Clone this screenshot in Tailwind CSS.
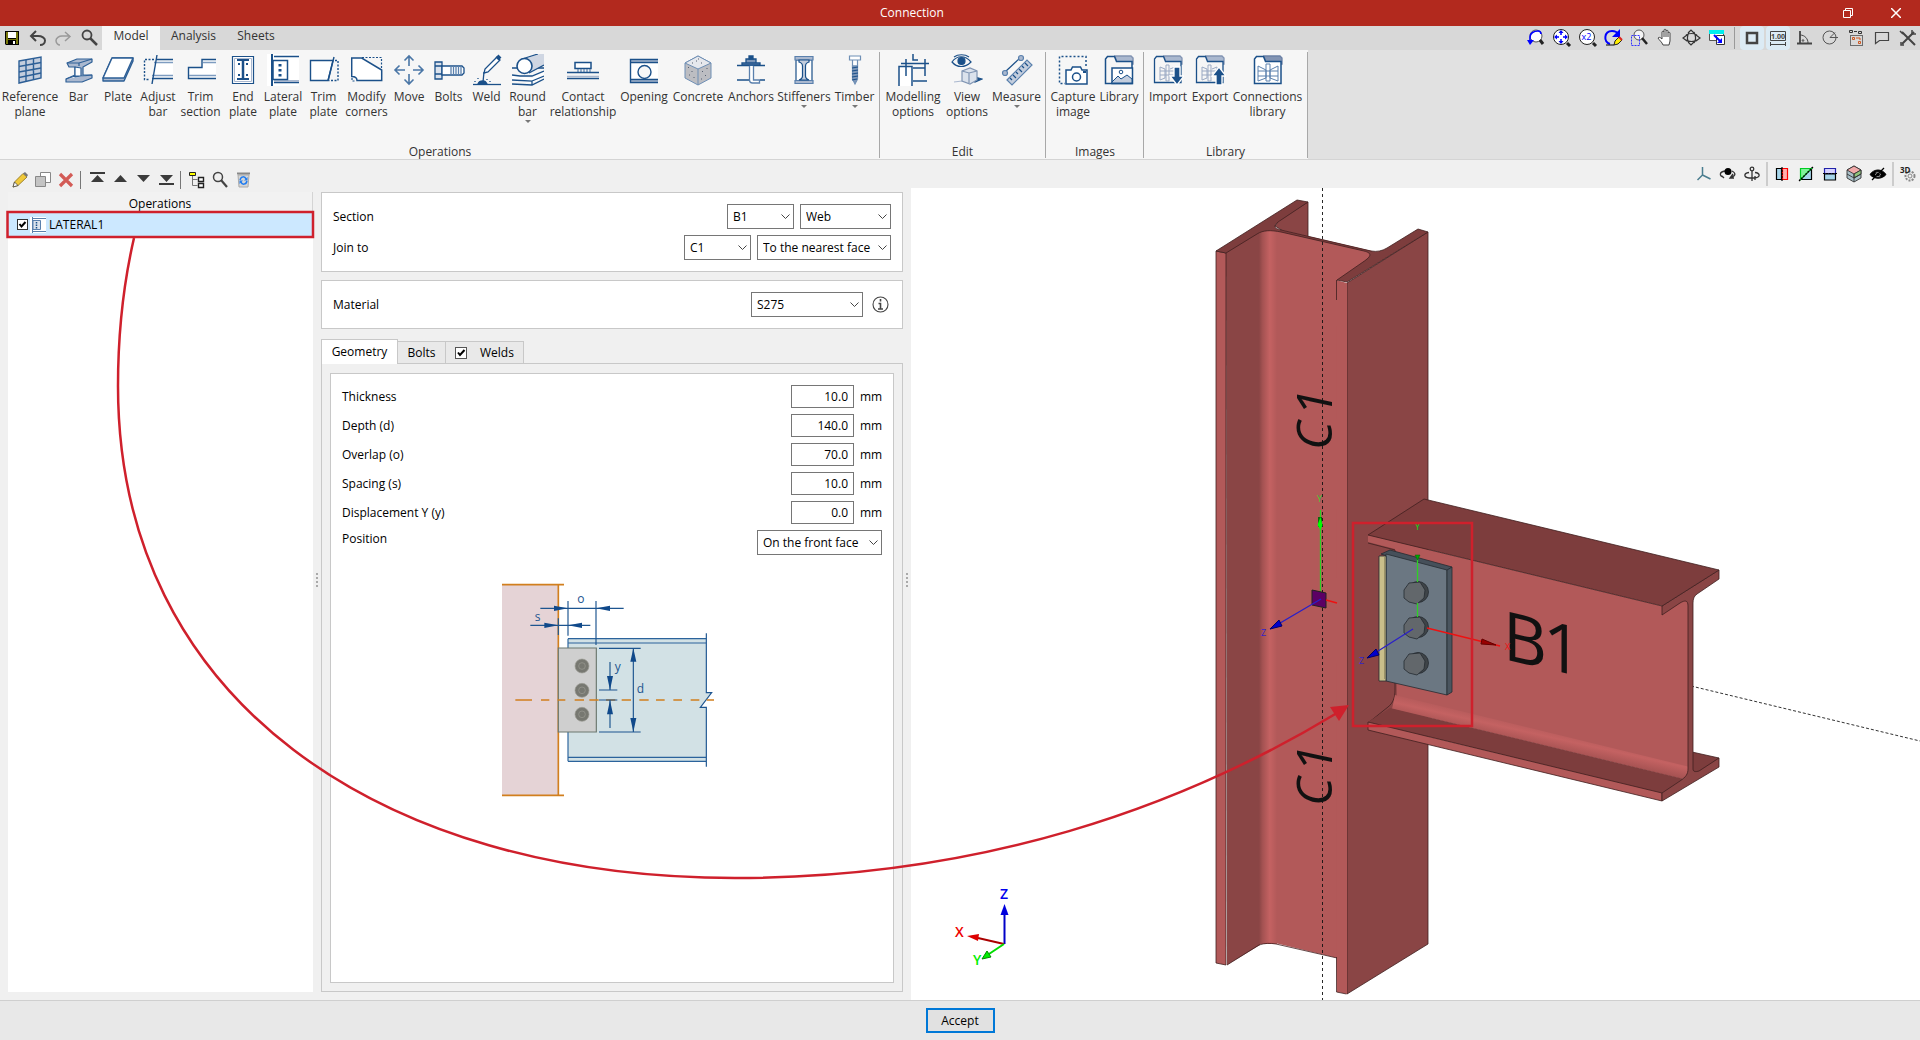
<!DOCTYPE html>
<html lang="en">

<head>
    <meta charset="UTF-8">
    <meta name="viewport" content="width=device-width, initial-scale=1.0">
    <script src="https://cdn.jsdelivr.net/npm/@tailwindcss/browser@4"></script>
    <title>Connection</title>
</head>

<body class="relative flex flex-col min-h-screen bg-[#f0f0f0] font-['Open_Sans','Noto_Sans',sans-serif] text-xs text-black">

    <!-- Title bar -->
    <header class="flex h-[26px] items-center bg-[#b2291e] text-white">
        <h1 class="flex-1 text-center">Connection</h1>
        <button class="flex w-12 justify-center" aria-label="Restore">
            <svg class="size-[10px]" viewBox="0 0 10 10" fill="none" stroke="#fff"><path d="M.5 2.500h7v7h-7zM2.500 2.500v-2h7v7h-2" /></svg>
        </button>
        <button class="flex w-12 justify-center" aria-label="Close">
            <svg class="size-[10px]" viewBox="0 0 10 10" fill="none" stroke="#fff" stroke-width="1.500"><path d="M0 0l10 10M10 0L0 10" /></svg>
        </button>
    </header>

    <!-- Quick access bar and ribbon tabs -->
    <nav class="flex h-6 items-center bg-[#d8d8d8] text-[#333]">
        <div class="flex w-[102px] shrink-0">
            <button class="w-[25px]" aria-label="Save">
                <svg class="size-6" viewBox="0 0 24 24"><path d="M5 5h14v14H6l-1-1z" fill="#000" /><path d="M6 6h2v7h8V6h2v12h-2v-4H8v4H6z" fill="#77770a" /><path d="M8 6h8v6H8z" fill="#fff" /><path d="M9 15h6v4H9z" fill="#000" /><path d="M13 15h2v3h-2z" fill="#fff" /></svg>
            </button>
            <button class="w-[26px]" aria-label="Undo">
                <svg class="size-6" viewBox="0 0 24 24" fill="none" stroke="#444" stroke-width="2"><path d="M11 5L6 10l5 5M6 10h7c4 0 7 2 7 4.500S18 19 15 19" /></svg>
            </button>
            <button class="w-[25px]" aria-label="Redo">
                <svg class="size-6" viewBox="0 0 24 24" fill="none" stroke="#999" stroke-width="1.500"><path d="M14 6l5 4.500-5 4.500M19 10h-8c-3 0-6 2-6 4.500S7 19 9 19" /></svg>
            </button>
            <button class="w-[26px]" aria-label="Search">
                <svg class="size-6" viewBox="0 0 24 24" fill="none" stroke="#444"><circle cx="11" cy="9" r="4.500" stroke-width="1.800" /><path d="M14 12l7 7" stroke-width="2.500" /></svg>
            </button>
        </div>
        <a href="#" class="flex h-6 w-[58px] justify-center bg-[#f6f6f6] leading-5">Model</a>
        <a href="#" class="flex h-6 w-[67px] justify-center leading-5">Analysis</a>
        <a href="#" class="flex h-6 w-[58px] justify-center leading-5">Sheets</a>

        <div class="ml-auto flex items-center gap-[2px]">
            <button aria-label="Previous view"><svg class="size-6" viewBox="0 0 24 24" fill="none"><circle cx="13" cy="10" r="6" fill="#fff" stroke="#555" /><path d="M17 14l3 4" stroke="#222" stroke-width="3" /><path d="M7 17V11c0-4 4-6 8-6 2 0 3 1 3 3" stroke="#00f" stroke-width="1.600" /><path d="M4 14h7l-4 5z" fill="#00f" /></svg></button>
            <button aria-label="Zoom extents"><svg class="size-6" viewBox="0 0 24 24" fill="none"><circle cx="12" cy="11" r="7.500" fill="#fff" stroke="#222" /><path d="M18 17l3 3" stroke="#222" stroke-width="3" /><path d="M12 5v4M12 13v4M6 11h4M14 11h4" stroke="#00f" stroke-width="1.500" /><path d="M12 4l-2.500 3h5zM12 18l-2.500-3h5zM5 11l3-2.500v5zM19 11l-3-2.500v5z" fill="#00f" /></svg></button>
            <button aria-label="Zoom x2"><svg class="size-6" viewBox="0 0 24 24" fill="none"><circle cx="12" cy="11" r="7.500" fill="#fff" stroke="#222" /><path d="M18 17l3 3" stroke="#222" stroke-width="3" /><text x="11.500" y="14" font-size="9" text-anchor="middle" fill="#00f">x2</text></svg></button>
            <button aria-label="Redraw"><svg class="size-6" viewBox="0 0 24 24" fill="none"><path d="M9 18C2 16 3 5 11 5c3 0 5 1 6 3" stroke="#00f" stroke-width="2" /><path d="M19 3v8h-8z" fill="#00f" /><path d="M5 19h8" stroke="#000" /><path d="M13 19l1-4 4-4 3 3-4 4z" fill="#fe0" stroke="#222" /><path d="M18 11l3 3" stroke="#d22" stroke-width="2" /></svg></button>
            <button aria-label="Zoom window"><svg class="size-6" viewBox="0 0 24 24" fill="none"><circle cx="12" cy="9" r="5" fill="#f4f4f4" stroke="#555" /><path d="M15 12l5 6" stroke="#222" stroke-width="2.500" /><path d="M4.500 9.500h8v10h-8z" stroke="#33f" stroke-dasharray="2 1" /></svg></button>
            <button aria-label="Pan"><svg class="size-6" viewBox="0 0 24 24"><path d="M10 19c-1-3-4-5-5-7 1-1 2-1 4 1V6c0-1 2-1 2 0V4c0-1 2-1 2 0v1c0-1 2-1 2 0v2c0-1 2-1 2 0v8l-1 4z" fill="#fff" stroke="#444" /><path d="M11 6v5M13 5v6M15 7v4" stroke="#444" /></svg></button>
            <button aria-label="Orbit"><svg class="size-6" viewBox="0 0 24 24" fill="none" stroke="#333" stroke-width="1.200"><path d="M9 7l3-3 3 3M9 16l3 3 3-3M8 9l-4 3 4 3M17 9l4 3-4 3M10 6c-2 4-2 8 0 11M15 6c2 4 2 8 0 11M7 9c3-2 8-2 11 0M7 14c3 2 8 2 11 0" /></svg></button>
            <button aria-label="Windows"><svg class="size-6" viewBox="0 0 24 24" fill="none"><path d="M4.500 4.500h14v10h-14z" fill="#fff" stroke="#555" /><path d="M4 4h15v4H4z" fill="#0ee" /><path d="M11.500 9.500h8v9h-8z" fill="#fff" stroke="#333" /><path d="M9 9l6 6" stroke="#00f" stroke-width="2" /><path d="M17 17v-5l-5 5z" fill="#00f" /></svg></button>
            <div class="mx-[3px] h-[22px] w-px bg-[#999]"></div>
            <button class="rounded bg-[#dcebf5]" aria-label="Outline"><svg class="size-6" viewBox="0 0 24 24" fill="none"><path d="M7 7h10v10H7z" stroke="#444" stroke-width="2.500" /></svg></button>
            <button class="rounded bg-[#dcebf5]" aria-label="Dimensions"><svg class="size-6" viewBox="0 0 24 24" fill="none" stroke="#444"><path d="M4.500 5.500h15v9h-15zM4.500 16v4M19.500 16v4M4.500 18.500h15" /><text x="12" y="13" font-size="7" text-anchor="middle" font-weight="700" fill="#444" stroke="none">1.00</text></svg></button>
            <button aria-label="Angle"><svg class="size-6" viewBox="0 0 24 24" fill="none" stroke="#444"><path d="M8 5v13M5 17.500h15" stroke-width="1.800" /><path d="M8 9c5 0 8 4 8 8" /><circle cx="11" cy="14.500" r=".8" /></svg></button>
            <button aria-label="Polar"><svg class="size-6" viewBox="0 0 24 24" fill="none" stroke="#555"><circle cx="11.500" cy="11.500" r="6.500" /><path d="M12 11.500h8M12 11.500l5-5" /></svg></button>
            <button aria-label="Grid"><svg class="size-6" viewBox="0 0 24 24" fill="none" stroke="#333"><path d="M5.500 4.500h3v2h-3zM14.500 5.500h3v2h-3zM10 5.500h3" /><path d="M6.500 9.500h12v10h-12z" stroke="#000" stroke-dasharray="1 1" /><path d="M8.500 11.500h2v2h-2zM14.500 15.500h2v2h-2zM12 12h4v2" stroke="#d1571f" /></svg></button>
            <button aria-label="Comment"><svg class="size-6" viewBox="0 0 24 24" fill="none" stroke="#444" stroke-width="1.200"><path d="M5.500 6.500h13v8h-9l-4 3z" /></svg></button>
            <button aria-label="Settings"><svg class="size-6" viewBox="0 0 24 24" fill="none" stroke="#444"><path d="M6 6l13 13M18 6L6 18" stroke-width="2" /><path d="M16 4v4h4M4 5l3 3M5 16v3h3" stroke-width="1.500" /></svg></button>
        </div>
    </nav>

    <!-- Ribbon -->
    <div class="flex h-[110px] border-b border-[#d4d4d4] bg-[#e1e1e1] text-[#333] leading-[15px]">
        <section class="bg-[#f6f6f6] pt-[2px]">
            <div class="flex h-[106px] flex-col justify-between border-r border-[#a8a8a8] pt-[2px] pr-[1px] pl-[2px]">
                <div class="flex items-start whitespace-nowrap">
                    <button class="flex w-[56px] flex-col items-center">
                        <svg class="mb-[3px] size-8" viewBox="0 0 32 32" stroke="#2d5f96" stroke-width="1.400"><path d="M5 7l22-4v21L5 29z" fill="#c3cddd" /><path d="M12 6v21.500M19.500 4.500v21M5 12.500l22-4M5 18l22-4M5 23.500l22-4.500" fill="none" /></svg>
                        Reference<br>plane
                    </button>
                    <button class="flex w-[41px] flex-col items-center">
                        <svg class="mb-[3px] size-8" viewBox="0 0 32 32" stroke="#2d5f96" stroke-width="1.200" stroke-linejoin="round"><path d="M4 9l10-4h15v3l-9 5v8l9 0v3l-10 4H3v-3l9-4v-8H6z" fill="#aab8cf" /><path d="M12 13l6 1v8l-6 1zM3 25l9-3h7l10-1" fill="#fff" /><path d="M4 9h12l13-4M16 9v3" fill="none" /></svg>
                        Bar
                    </button>
                    <button class="flex w-[38px] flex-col items-center">
                        <svg class="mb-[3px] size-8" viewBox="0 0 32 32" stroke="#2d5f96" stroke-width="1.400" stroke-linejoin="round"><path d="M1 24l9-20h21v3l-9 20H1z" fill="#aab8cf" /><path d="M1 24l9-20h21l-9 20z" fill="#fff" /></svg>
                        Plate
                    </button>
                    <button class="flex w-[42px] flex-col items-center">
                        <svg class="mb-[3px] size-8" viewBox="0 0 32 32" fill="none" stroke="#1b5089" stroke-width="1.400"><path d="M14 7h17v17H11z" fill="#fff" stroke="none" /><path d="M12 8.500h19M10 21.500h21" stroke="#7e9cc0" /><path d="M14 5.500h17M10 24.500h21" /><path d="M12 5.500H2.500v20H8" stroke-dasharray="2 1.500" /><path d="M15 1l-5 29" /></svg>
                        Adjust<br>bar
                    </button>
                    <button class="flex w-[43px] flex-col items-center">
                        <svg class="mb-[3px] size-8" viewBox="0 0 32 32" fill="none" stroke="#1b5089" stroke-width="1.400"><path d="M3 13h13V6h15v19H3z" fill="#fff" stroke="none" /><path d="M31 5.500H17v8H3.500v11H31" /><path d="M18 8.500h13M4 21.500h27" stroke="#7e9cc0" /></svg>
                        Trim<br>section
                    </button>
                    <button class="flex w-[42px] flex-col items-center">
                        <svg class="mb-[3px] size-8" viewBox="0 0 32 32" fill="none" stroke="#1b5089"><path d="M5.500 2.500h21v27h-21z" fill="#fff" stroke-width="1.200" /><path d="M7.500 4.500h17v23h-17z" stroke="#aab8cf" /><path d="M10 6h12M10 25h12" stroke-width="2" /><path d="M16 6v19" stroke-width="2.500" /><path d="M12 9v2M20 9v2M12 20v2M20 20v2" stroke-width="2" /></svg>
                        End<br>plate
                    </button>
                    <button class="flex w-[38px] flex-col items-center">
                        <svg class="mb-[3px] size-8" viewBox="0 0 32 32" fill="none" stroke="#1b5089"><path d="M0 0h32v32H0z" fill="#fff" stroke="none" /><path d="M5 0v32" stroke-width="2" /><path d="M7 2.500h25M7 28.500h25" stroke-width="1.500" /><path d="M7 27h25" stroke="#aab8cf" stroke-width="2" /><path d="M6 6.500h14.500v19H6z" stroke-width="1.500" /><path d="M13 10v2.500M13 15v2.500M13 20v2.500" stroke-width="3" /></svg>
                        Lateral<br>plate
                    </button>
                    <button class="flex w-[43px] flex-col items-center">
                        <svg class="mb-[3px] size-8" viewBox="0 0 32 32" fill="none" stroke="#1b5089" stroke-width="1.400"><path d="M25 6.500H2.500v20H20z" fill="#fff" /><path d="M26 3l-6 24" /><path d="M27 6.500h3v20h-9" stroke-dasharray="2 1.500" /></svg>
                        Trim<br>plate
                    </button>
                    <button class="flex w-[43px] flex-col items-center">
                        <svg class="mb-[3px] size-8" viewBox="0 0 32 32" fill="none" stroke="#1b5089" stroke-width="1.500"><path d="M.7 4h10l20 12v10.500H6c0-3-2-4-5.300-4z" fill="#fff" /><path d="M11 3.500h19.500V15M1 24v3h4" stroke-dasharray="2 1.500" stroke-width="1.200" /></svg>
                        Modify<br>corners
                    </button>
                    <button class="flex w-[42px] flex-col items-center">
                        <svg class="mb-[3px] size-8" viewBox="0 0 32 32" fill="none" stroke="#4a76a6" stroke-width="1.600"><path d="M16 12V2M16 20v10M12 16H2M20 16h10M11.500 6.500L16 2l4.500 4.500M11.500 25.500L16 30l4.500-4.500M6.500 11.500L2 16l4.500 4.500M25.500 11.500L30 16l-4.500 4.500" /></svg>
                        Move
                    </button>
                    <button class="flex w-[37px] flex-col items-center">
                        <svg class="mb-[3px] size-8" viewBox="0 0 32 32" stroke="#1b5089" stroke-width="1.300"><path d="M2 8h7v17H2z" fill="#dbe2ec" /><path d="M2 12h7M2 20h7" /><path d="M9 12h20l2 2v5l-2 2H9z" fill="#fff" /><path d="M18 12v9M20.500 12v9M23 12v9M25.500 12v9M28 12v9" stroke="#5a80ad" /></svg>
                        Bolts
                    </button>
                    <button class="flex w-[39px] flex-col items-center">
                        <svg class="mb-[3px] size-8" viewBox="0 0 32 32" fill="none" stroke="#1b5089" stroke-width="1.300"><path d="M2 30.500h28" /><path d="M26 3l3 3-12 12-4 1 1-4z" fill="#fff" /><path d="M26 2l3 3" stroke-width="4" /><path d="M13 18l-1 10" /><path d="M7 30c1-3 3-3 5-3s3 1 4 3z" fill="#1b5089" /><path d="M4 27v1M7 24v1M16 25v1M19 28v-1" /></svg>
                        Weld
                    </button>
                    <button class="flex w-[43px] flex-col items-center">
                        <svg class="mb-[3px] size-8" viewBox="0 0 32 32" fill="none" stroke="#1b5089" stroke-width="1.300"><path d="M0 26l20 3 12-6V18L20 24 0 21z" fill="#fff" stroke="none" /><path d="M0 14h32M0 21l8 1h12l12-5M0 26l20 1v4M0 30l20 1 12-6M20 27l12-5" /><path d="M12 5L28 0h4v11l-15 8z" fill="#cfd6e2" stroke="none" /><path d="M10 5L26 0M17 19l15-8" /><circle cx="12.500" cy="12" r="7.500" fill="#fff" stroke-width="1.600" /></svg>
                        Round<br>bar
                        <span class="mt-[1px] h-0 w-0 border-x-[3px] border-t-[3px] border-x-transparent border-t-[#777]"></span>
                    </button>
                    <button class="flex w-[68px] flex-col items-center">
                        <svg class="mb-[3px] size-8" viewBox="0 0 32 32" fill="none" stroke="#1b5089" stroke-width="1.500"><path d="M8 8.500h16v6H8z" fill="#fff" /><path d="M11 15v3M14 15v3M17 15v3M20 15v3M23 15v3" stroke="#5a80ad" stroke-width="1.200" /><path d="M0 18.500h32M0 24.500h32" /><path d="M0 22.500h32" stroke="#aab8cf" /></svg>
                        Contact<br>relationship
                    </button>
                    <button class="flex w-[54px] flex-col items-center">
                        <svg class="mb-[3px] size-8" viewBox="0 0 32 32" fill="none" stroke="#1b5089" stroke-width="1.400"><path d="M2 5h28v23H2z" fill="#fff" stroke="none" /><path d="M2 7h28M2 27h28" stroke="#aab8cf" stroke-width="3" /><path d="M30 5.500H2.500v23H30M3 8.500h27M3 25.500h27" /><circle cx="16.500" cy="18" r="6.500" fill="#f6f6f6" /></svg>
                        Opening
                    </button>
                    <button class="flex w-[54px] flex-col items-center">
                        <svg class="mb-[3px] size-8" viewBox="0 0 32 32" stroke="#6f8fb5"><path d="M16 2l13 7v15l-13 7-13-7V9z" fill="#bcbdc2" /><path d="M16 2l13 7-13 6L3 9z" fill="#e6e8ed" /><path d="M16 15v16" /><path d="M6 13l1 1M10 17v1M7 21l1 0M12 23v1M20 17l1 1M25 14v1M23 21l1 1M19 25h1M14 7h1M19 9h1M10 9h1M16 5h1" stroke="#555f70" /></svg>
                        Concrete
                    </button>
                    <button class="flex w-[52px] flex-col items-center">
                        <svg class="mb-[3px] size-8" viewBox="0 0 32 32" fill="none" stroke="#1b5089" stroke-width="1.300"><path d="M2 11.500h28M2 26h13M25 26h5" /><path d="M14.500 11v15c0 2 1 3 3 3h7v-3h-6V11z" fill="#fff" stroke="#5a80ad" /><path d="M7 9h18v2H7zM11 5h10v4H11z" fill="#7e97b8" /><path d="M14 2h4v3h-4z" fill="#1b5089" /></svg>
                        Anchors
                    </button>
                    <button class="flex w-[54px] flex-col items-center">
                        <svg class="mb-[3px] size-8" viewBox="0 0 32 32" stroke="#1b5089" stroke-width="1.200"><path d="M8 6h16v21H8z" fill="#fff" /><path d="M7 2.500h18v3.500H7zM7 26.500h18v3H7z" fill="#aab8cf" stroke="#5a80ad" /><path d="M11 6h10v2c-3 1-3.500 2-3.500 4v10c0 2 .5 3 3.500 4H11c3-1 3.500-2 3.500-4V12c0-2-.5-3-3.500-4z" fill="#c3cddd" /></svg>
                        Stiffeners
                        <span class="mt-[1px] h-0 w-0 border-x-[3px] border-t-[3px] border-x-transparent border-t-[#777]"></span>
                    </button>
                    <button class="flex w-[47px] flex-col items-center">
                        <svg class="mb-[3px] size-8" viewBox="0 0 32 32" stroke="#6f8fb5" stroke-width="1.200"><path d="M10.500 2h11v4h-11zM13.500 6h5v6h-5z" fill="#fff" /><path d="M13.500 12h5v13l-2.500 5-2.500-5z" fill="#7e97b8" /><path d="M13 14l6-1M13 17l6-1M13 20l6-1M13 23l6-1M13 26l5-1" stroke="#1b5089" /></svg>
                        Timber
                        <span class="mt-[1px] h-0 w-0 border-x-[3px] border-t-[3px] border-x-transparent border-t-[#777]"></span>
                    </button>
                </div>
                <p class="text-center leading-[13px]">Operations</p>
            </div>
        </section>
        <section class="bg-[#f6f6f6] pt-[2px]">
            <div class="flex h-[106px] flex-col justify-between border-r border-[#a8a8a8] px-[3px] pt-[2px]">
                <div class="flex items-start whitespace-nowrap">
                    <button class="flex w-[60px] flex-col items-center">
                        <svg class="mb-[3px] size-8" viewBox="0 0 32 32" fill="none" stroke="#1b5089" stroke-width="1.500"><path d="M2 12h14v20H2z" fill="#fff" stroke="none" /><path d="M2 32V12.500h13V32M4 9.500h28M16 0v6h5M9 5v17M28 5v17M16 14h12M16 27h14" /></svg>
                        Modelling<br>options
                    </button>
                    <button class="flex w-[48px] flex-col items-center">
                        <svg class="mb-[3px] size-8" viewBox="0 0 32 32" fill="none" stroke="#1b5089" stroke-width="1.200"><path d="M1 8c5-7 13-7 19 0-6 6-14 6-19 0zM3 3c4-3 11-3 15 0" /><circle cx="10.500" cy="7" r="3.500" fill="#1b5089" /><path d="M24 28v-5l7 2z" fill="#1b5089" /><path d="M3 28l8-1" stroke="#aab8cf" /><path d="M11 17l8-3 7 3v9l-7 4-8-3z" fill="#dbe2ec" stroke="#8095b3" /><path d="M11 17l7 2 8-2M18 19v10" stroke="#8095b3" /></svg>
                        View<br>options
                    </button>
                    <button class="flex w-[51px] flex-col items-center">
                        <svg class="mb-[3px] size-8" viewBox="0 0 32 32" stroke="#5a80ad" stroke-width="1.200"><path d="M4 18L19 4" stroke="#1b5089" /><circle cx="4" cy="19" r="2.500" fill="#aab8cf" /><circle cx="20" cy="4" r="2.500" fill="#aab8cf" /><path d="M6 26L26 6l5 5-20 20z" fill="#c3cddd" /><path d="M9 24l2 2M12 21l3 3M15 18l2 2M18 15l3 3M21 12l2 2M24 9l3 3" stroke="#1b5089" /></svg>
                        Measure
                        <span class="mt-[1px] h-0 w-0 border-x-[3px] border-t-[3px] border-x-transparent border-t-[#777]"></span>
                    </button>
                </div>
                <p class="text-center leading-[13px]">Edit</p>
            </div>
        </section>
        <section class="bg-[#f6f6f6] pt-[2px]">
            <div class="flex h-[106px] flex-col justify-between border-r border-[#a8a8a8] pt-[2px] pr-[2px] pl-[3px]">
                <div class="flex items-start whitespace-nowrap">
                    <button class="flex w-[48px] flex-col items-center">
                        <svg class="mb-[3px] size-8" viewBox="0 0 32 32" fill="none" stroke="#1b5089" stroke-width="1.500"><path d="M29 12V2.500H2.500v27H8" stroke-dasharray="2 2" /><path d="M9 16h5l1.500-3h8L25 16h5v14H9z" fill="#fff" /><circle cx="19.500" cy="23" r="4" /><path d="M26 18h3" stroke-width="2" /></svg>
                        Capture<br>image
                    </button>
                    <button class="flex w-[44px] flex-col items-center">
                        <svg class="mb-[3px] size-8" viewBox="0 0 32 32" fill="none" stroke="#1b5089" stroke-width="1.500"><path d="M12 2h16l2 2v6H14z" fill="#aab8cf" stroke="#8294b3" /><path d="M2.500 29.500V5l2-2.500h7l2 5h15.500v22z" fill="#f6f6f6" /><path d="M9 14h20.500v15.500H9z" fill="#fff" /><path d="M9 28l6-6 3 3 6-4 5 4v4H9z" fill="#c3cddd" stroke-width="1" /><circle cx="18" cy="18" r="1.800" stroke-width="1" /></svg>
                        Library
                    </button>
                </div>
                <p class="text-center leading-[13px]">Images</p>
            </div>
        </section>
        <section class="bg-[#f6f6f6] pt-[2px]">
            <div class="flex h-[106px] flex-col justify-between border-r border-[#a8a8a8] px-[3px] pt-[2px]">
                <div class="flex items-start whitespace-nowrap">
                    <button class="flex w-[42px] flex-col items-center">
                        <svg class="mb-[3px] size-8" viewBox="0 0 32 32" fill="none" stroke="#5a80ad" stroke-width="1.300"><path d="M12 2h16l2 2v6H14z" fill="#aab8cf" stroke="#8294b3" /><path d="M2.500 28.500V5l2-2.500h7l2 5H29v21z" fill="#f6f6f6" stroke="#1b5089" /><path d="M8 13l5 2v9l-5 2zM14 11h3v16h-3zM18 15l5-2v10M8 17h14M8 21h14" stroke="#9aa9c3" stroke-width="1" /><path d="M22 13h6v9h4l-7 9-7-9h4z" fill="#1b5089" stroke="#fff" /></svg>
                        Import
                    </button>
                    <button class="flex w-[42px] flex-col items-center">
                        <svg class="mb-[3px] size-8" viewBox="0 0 32 32" fill="none" stroke="#5a80ad" stroke-width="1.300"><path d="M12 2h16l2 2v6H14z" fill="#aab8cf" stroke="#8294b3" /><path d="M2.500 28.500V5l2-2.500h7l2 5H29v21z" fill="#f6f6f6" stroke="#1b5089" /><path d="M8 13l5 2v9l-5 2zM14 11h3v16h-3zM18 15l5-2v10M8 17h14M8 21h14" stroke="#9aa9c3" stroke-width="1" /><path d="M22 31h6v-9h4l-7-9-7 9h4z" fill="#1b5089" stroke="#fff" /></svg>
                        Export
                    </button>
                    <button class="flex w-[73px] flex-col items-center">
                        <svg class="mb-[3px] size-8" viewBox="0 0 32 32" fill="none" stroke="#1b5089" stroke-width="1.300"><path d="M12 2h16l2 2v6H14z" fill="#8294b3" stroke="#6b80a5" /><path d="M2.500 29.500V5l2-2.500h7l2 5h15.500v22z" fill="#fff" stroke-width="1.500" /><path d="M6 12l8 4v8l-8 3zM26 12l-8 4v8l8 3zM14 10h4v17h-4zM6 17h20M6 22h20" stroke="#5a80ad" stroke-width="1" /></svg>
                        Connections<br>library
                    </button>
                </div>
                <p class="text-center leading-[13px]">Library</p>
            </div>
        </section>
    </div>

    <main class="flex flex-1">

        <!-- Operations list and data panels -->
        <div class="flex w-[911px] shrink-0 flex-col pb-2">
            <div class="flex h-8 items-center pt-2 pl-2">
                <button class="w-[23px]" aria-label="Edit"><svg class="size-6" viewBox="0 0 24 24"><path d="M5 19l1.500-5L15 5.500l4 3.500-9 8.500z" fill="#f0c93b" stroke="#8a6d14" stroke-width=".8" /><path d="M5 19l1.500-5 3.500 3.500z" fill="#fff" stroke="#444" stroke-width=".8" /><path d="M15 5.500L17 4l3 3-1.200 2z" fill="#777" /></svg></button>
                <button class="w-[23px]" aria-label="Copy"><svg class="size-6" viewBox="0 0 24 24" stroke="#888"><path d="M9.500 4.500h10v10h-10z" fill="#fff" /><path d="M4.500 8.500h10v10h-10z" fill="#c4c4c4" /></svg></button>
                <button class="w-[23px]" aria-label="Delete"><svg class="size-6" viewBox="0 0 24 24"><path d="M6 6l12 12M18 6L6 18" stroke="#d35b56" stroke-width="3.200" /></svg></button>
                <div class="mr-[4px] ml-[3px] h-[18px] w-px bg-[#777]"></div>
                <button class="w-[23px]" aria-label="Move to top"><svg class="size-6" viewBox="0 0 24 24" fill="#3b3b3b"><path d="M5 4h15v2H5zM12.500 7l6.500 7H6z" /></svg></button>
                <button class="w-[23px]" aria-label="Move up"><svg class="size-6" viewBox="0 0 24 24" fill="#3b3b3b"><path d="M12.500 7l6.500 7H6z" /></svg></button>
                <button class="w-[23px]" aria-label="Move down"><svg class="size-6" viewBox="0 0 24 24" fill="#3b3b3b"><path d="M12.500 14L19 7H6z" /></svg></button>
                <button class="w-[23px]" aria-label="Move to bottom"><svg class="size-6" viewBox="0 0 24 24" fill="#3b3b3b"><path d="M5 15h15v2H5zM12.500 14L19 7H6z" /></svg></button>
                <div class="mr-[4px] ml-[3px] h-[18px] w-px bg-[#777]"></div>
                <button class="w-[23px]" aria-label="Tree"><svg class="size-6" viewBox="0 0 24 24" fill="none" stroke="#222"><path d="M4.500 4.500h6v3h-6z" fill="#ff0" /><path d="M7.500 8v9.500h5M7.500 11.500h5" stroke="#777" /><path d="M13.500 9.500h5v4h-5zM13.500 15.500h5v4h-5z" fill="#fff" stroke-width="1.400" /></svg></button>
                <button class="w-[23px]" aria-label="Find"><svg class="size-6" viewBox="0 0 24 24" fill="none" stroke="#444"><circle cx="10" cy="9" r="4.500" stroke-width="1.500" /><path d="M13 12l6 7" stroke-width="2.200" /></svg></button>
                <button class="w-[23px]" aria-label="Recycle"><svg class="size-6" viewBox="0 0 24 24" fill="none"><path d="M7 7h11l-1 12H8z" fill="#d6d6d6" stroke="#aaa" /><path d="M6 5.500h13" stroke="#888" stroke-width="2" /><path d="M9 12c1-4 5-4 6-1M16 13c-1 4-5 4-6 1" stroke="#1e7bf0" stroke-width="1.500" /><path d="M16.500 9v3.500H13zM8.500 16v-3.500H12z" fill="#1e7bf0" /></svg></button>
            </div>

            <div class="flex flex-1">
                <section class="ml-2 flex w-[305px] flex-col bg-white">
                    <h2 class="h-5 border-r border-[#d4d4d4] bg-[#f2f2f2] text-center leading-6">Operations</h2>
                    <div class="flex h-[25px] items-center bg-[#cce8ff] pl-[9px]">
                        <span class="relative flex size-[11px]">
                            <input id="op1" type="checkbox" checked class="size-[11px] appearance-none border border-[#333] bg-white">
                            <svg class="pointer-events-none absolute inset-0 size-[11px]" viewBox="0 0 11 11" fill="none" stroke="#000" stroke-width="2"><path d="M2.500 5l2 2.500L8.500 3" /></svg>
                        </span>
                        <svg class="ml-[2px] size-4" viewBox="0 0 16 16" fill="none" stroke="#5a80ad"><path d="M0 0h16v16H0z" fill="#fff" stroke="none" /><path d="M2.500 0v16M3 1.500h13M3 14.500h13" /><path d="M3 3.500h7.500v9H3z" fill="#dbe2ec" /><path d="M6.500 5v1.500M6.500 7.500v1.500M6.500 10v1.500" stroke="#1b5089" stroke-width="1.500" /></svg>
                        <label for="op1" class="ml-[3px]">LATERAL1</label>
                    </div>
                </section>

                <div class="flex w-2 items-center justify-center pb-6">
                    <div class="flex flex-col gap-[2px]">
                        <i class="size-[2px] bg-[#aaa]"></i><i class="size-[2px] bg-[#aaa]"></i><i class="size-[2px] bg-[#aaa]"></i><i class="size-[2px] bg-[#aaa]"></i>
                    </div>
                </div>

                <div class="flex w-[582px] flex-col">
                    <section class="flex flex-col gap-[6px] border border-[#c8c8c8] bg-white p-[11px]">
                        <div class="flex items-center justify-between">
                            <label for="section">Section</label>
                            <div class="flex gap-[6px]">
                                <div class="relative">
                                    <select id="section" class="h-[25px] w-[67px] appearance-none border border-[#767676] bg-white pl-[5px]"><option>B1</option></select>
                                    <svg class="pointer-events-none absolute top-[10px] right-[4px] h-[6px] w-[9px]" viewBox="0 0 9 6" fill="none" stroke="#444"><path d="M.5.5l4 4 4-4" /></svg>
                                </div>
                                <div class="relative">
                                    <select aria-label="Part" class="h-[25px] w-[91px] appearance-none border border-[#767676] bg-white pl-[5px]"><option>Web</option></select>
                                    <svg class="pointer-events-none absolute top-[10px] right-[4px] h-[6px] w-[9px]" viewBox="0 0 9 6" fill="none" stroke="#444"><path d="M.5.5l4 4 4-4" /></svg>
                                </div>
                            </div>
                        </div>
                        <div class="flex items-center justify-between">
                            <label for="join">Join to</label>
                            <div class="flex gap-[6px]">
                                <div class="relative">
                                    <select id="join" class="h-[25px] w-[67px] appearance-none border border-[#767676] bg-white pl-[5px]"><option>C1</option></select>
                                    <svg class="pointer-events-none absolute top-[10px] right-[4px] h-[6px] w-[9px]" viewBox="0 0 9 6" fill="none" stroke="#444"><path d="M.5.5l4 4 4-4" /></svg>
                                </div>
                                <div class="relative">
                                    <select aria-label="Face" class="h-[25px] w-[134px] appearance-none border border-[#767676] bg-white pl-[5px]"><option>To the nearest face</option></select>
                                    <svg class="pointer-events-none absolute top-[10px] right-[4px] h-[6px] w-[9px]" viewBox="0 0 9 6" fill="none" stroke="#444"><path d="M.5.5l4 4 4-4" /></svg>
                                </div>
                            </div>
                        </div>
                    </section>

                    <section class="mt-2 flex items-center border border-[#c8c8c8] bg-white p-[11px]">
                        <label for="material" class="flex-1">Material</label>
                        <div class="relative">
                            <select id="material" class="h-[25px] w-[112px] appearance-none border border-[#767676] bg-white pl-[5px]"><option>S275</option></select>
                            <svg class="pointer-events-none absolute top-[10px] right-[4px] h-[6px] w-[9px]" viewBox="0 0 9 6" fill="none" stroke="#444"><path d="M.5.5l4 4 4-4" /></svg>
                        </div>
                        <button class="mr-[2px] ml-[9px]" aria-label="Information">
                            <svg class="size-[17px]" viewBox="0 0 17 17" fill="none" stroke="#444"><circle cx="8.500" cy="8.500" r="7.500" stroke-width="1.100" /><path d="M8.500 3v2.500M6.500 7.500h2V13M6 13h5" stroke-width="1.600" /></svg>
                        </button>
                    </section>

                    <div class="mt-[10px] flex h-6 items-end">
                        <button class="z-10 -mb-px h-[25px] w-[77px] border border-b-0 border-[#c8c8c8] bg-white">Geometry</button>
                        <button class="h-[22px] w-[48px] border-t border-r border-[#c8c8c8] bg-[#e9e9e9]">Bolts</button>
                        <div class="flex h-[22px] w-[78px] items-center gap-[13px] border-t border-r border-[#c8c8c8] bg-[#e9e9e9] pl-[9px]">
                            <span class="relative flex size-[12px]">
                                <input id="welds" type="checkbox" checked class="size-[12px] appearance-none border border-[#555] bg-white">
                                <svg class="pointer-events-none absolute inset-0 size-[12px]" viewBox="0 0 12 12" fill="none" stroke="#000" stroke-width="2"><path d="M3 5.500l2 2.500 4.500-5" /></svg>
                            </span>
                            <label for="welds">Welds</label>
                        </div>
                    </div>
                    <div class="flex flex-1 flex-col border border-[#c8c8c8] px-2 pt-[9px] pb-2">
                        <section class="flex flex-1 flex-col gap-[6px] border border-[#c8c8c8] bg-white p-[11px]">
                            <div class="flex items-center gap-[6px]">
                                <label for="thickness" class="flex-1">Thickness</label>
                                <input id="thickness" type="text" value="10.0" class="h-[23px] w-[63px] border border-[#767676] pr-[5px] text-right">
                                <span class="w-[22px]">mm</span>
                            </div>
                            <div class="flex items-center gap-[6px]">
                                <label for="depth" class="flex-1">Depth (d)</label>
                                <input id="depth" type="text" value="140.0" class="h-[23px] w-[63px] border border-[#767676] pr-[5px] text-right">
                                <span class="w-[22px]">mm</span>
                            </div>
                            <div class="flex items-center gap-[6px]">
                                <label for="overlap" class="flex-1">Overlap (o)</label>
                                <input id="overlap" type="text" value="70.0" class="h-[23px] w-[63px] border border-[#767676] pr-[5px] text-right">
                                <span class="w-[22px]">mm</span>
                            </div>
                            <div class="flex items-center gap-[6px]">
                                <label for="spacing" class="flex-1">Spacing (s)</label>
                                <input id="spacing" type="text" value="10.0" class="h-[23px] w-[63px] border border-[#767676] pr-[5px] text-right">
                                <span class="w-[22px]">mm</span>
                            </div>
                            <div class="flex items-center gap-[6px]">
                                <label for="displacement" class="flex-1">Displacement Y (y)</label>
                                <input id="displacement" type="text" value="0.0" class="h-[23px] w-[63px] border border-[#767676] pr-[5px] text-right">
                                <span class="w-[22px]">mm</span>
                            </div>
                            <div class="flex items-start justify-between">
                                <label for="position" class="leading-[18px]">Position</label>
                                <div class="relative">
                                    <select id="position" class="h-[25px] w-[125px] appearance-none border border-[#767676] bg-white pl-[5px]"><option>On the front face</option></select>
                                    <svg class="pointer-events-none absolute top-[10px] right-[4px] h-[6px] w-[9px]" viewBox="0 0 9 6" fill="none" stroke="#444"><path d="M.5.5l4 4 4-4" /></svg>
                                </div>
                            </div>

                            <!-- Plate diagram -->
                            <svg class="mx-auto mt-[19px] size-[220px]" viewBox="66 60 660 660" fill="none">
                                <path d="M66 74h168v632H66z" fill="#e5d3d6" />
                                <path d="M66 74h186M66 706h186M235 74v632" stroke="#d17f1e" stroke-width="5" />
                                <path d="M264 236h414v162l16 0-34 44h18v162H264z" fill="#d2e1e5" />
                                <path d="M264 236v368M264 236h414M264 249h414M264 592h414M264 604h414" stroke="#2b639c" stroke-width="3.500" />
                                <path d="M679 220v178h16l-34 44h18v178" stroke="#1d5590" stroke-width="3.500" />
                                <path d="M235 264h114v252H235z" fill="#cfcfcf" stroke="#6c7870" stroke-width="3.500" />
                                <path d="M106 420h50M183 420h25M233 420h23M284 420h28M328 420h28M378 420h28M425 420h28M478 420h28M528 420h26M580 420h26M632 420h26M680 420h22" stroke="#d17f1e" stroke-width="5" />
                                <g fill="#777871" stroke="#9b9c94" stroke-width="2"><circle cx="306" cy="318" r="21" /><circle cx="306" cy="391" r="21" /><circle cx="306" cy="463" r="21" /><circle cx="306" cy="318" r="10" /><circle cx="306" cy="391" r="10" /><circle cx="306" cy="463" r="10" /></g>
                                <path d="M235 175v50M264 123v104M348 123v132M181 145h250M151 196h180M357 265h125M357 516h125M460 265v251M390 306v84M390 420v84M357 390h55M357 420h55" stroke="#1d5590" stroke-width="3.500" />
                                <path d="M264 145l-42-8v16zM348 145l42-8v16zM235 196l-42-8v16zM264 196l42-8v16zM460 265l-9 40h18zM460 516l-9-42h18zM390 390l-9-42h18zM390 421l-9 42h18z" fill="#10498a" />
                                <g fill="#1d5590" font-size="36"><text x="292" y="129">o</text><text x="164" y="184">s</text><text x="404" y="332">y</text><text x="470" y="399">d</text></g>
                            </svg>
                        </section>
                    </div>
                </div>

                <div class="flex w-2 items-center justify-center pb-6">
                    <div class="flex flex-col gap-[2px]">
                        <i class="size-[2px] bg-[#aaa]"></i><i class="size-[2px] bg-[#aaa]"></i><i class="size-[2px] bg-[#aaa]"></i><i class="size-[2px] bg-[#aaa]"></i>
                    </div>
                </div>
            </div>
        </div>

        <!-- 3D view -->
        <div class="flex min-w-0 flex-1 flex-col">
            <div class="flex h-7 items-center justify-end">
                <button aria-label="Axes"><svg class="size-6" viewBox="0 0 24 24" fill="none" stroke="#4a7d8f" stroke-width="1.500"><path d="M10.500 5v9M10.500 13l-5 5M10.500 13l8 4" /></svg></button>
                <button aria-label="Rotate view"><svg class="size-6" viewBox="0 0 24 24" fill="none" stroke="#333" stroke-width="1.300"><path d="M9 9c-6 1-6 5-1 6.500M16 9c4 2 4 5-1 6M8 16l-2-2M17 12l-3 4h4" /><circle cx="12" cy="9.500" r="3.500" fill="#000" stroke="none" /></svg></button>
                <button aria-label="Rotate around axis"><svg class="size-6" viewBox="0 0 24 24" fill="none" stroke="#333" stroke-width="1.300"><circle cx="12" cy="7" r="1.800" /><path d="M12 9v10M9 10.500c-6 1-5 5 0 5.500h6c6-1 5-5 0-5.500M15 14v4" /></svg></button>
                <div class="mx-[2px] h-6 w-[2px] bg-[#ccc]"></div>
                <button aria-label="Section X"><svg class="size-6" viewBox="0 0 24 24" stroke-width="1.200"><path d="M6.500 6.500h5v11h-5z" fill="#a6d5ea" stroke="#000" /><path d="M12.500 6.500h5v11h-5z" fill="#ffb0b0" stroke="#f00" /><path d="M12 5v14" stroke="#000" stroke-dasharray="2 1" /></svg></button>
                <button aria-label="Section diagonal"><svg class="size-6" viewBox="0 0 24 24" stroke-width="1.200"><path d="M17.500 6.500v11h-11z" fill="#a6d5ea" stroke="#000" /><path d="M17.500 6.500h-11v11z" fill="#80f49a" stroke="#0c2" /><path d="M5 19L19 5" stroke="#000" stroke-dasharray="2 1" /></svg></button>
                <button aria-label="Section Z"><svg class="size-6" viewBox="0 0 24 24" stroke-width="1.200"><path d="M6.500 6.500h11v5h-11z" fill="#d6d3ff" stroke="#22a" /><path d="M6.500 12h11v6h-11z" fill="#a6d5ea" stroke="#000" /><path d="M5 11.500h14" stroke="#000" stroke-dasharray="2 1" /></svg></button>
                <button aria-label="Layers"><svg class="size-6" viewBox="0 0 24 24" stroke="#333" stroke-width=".9"><path d="M12 4l7 4v8l-7 4-7-4V8z" fill="#a8bfc8" /><path d="M12 4l7 4-7 4-7-4z" fill="#f1a9a9" /><path d="M12 12l7-4v4l-7 4z" fill="#8fc47b" /><path d="M5 12l7 4 7-4M12 12v8" fill="none" /></svg></button>
                <button aria-label="Hide"><svg class="size-6" viewBox="0 0 24 24" fill="none" stroke="#000"><path d="M4 12.500c4-6 12-6 16 0-4 5-12 5-16 0z" fill="#000" /><circle cx="12" cy="12.500" r="3" fill="#eee" /><circle cx="12" cy="12.500" r="1.500" fill="#000" /><path d="M6 18L18 6" stroke-width="1.300" /></svg></button>
                <div class="mx-[2px] h-6 w-[2px] bg-[#ccc]"></div>
                <button aria-label="3D settings"><svg class="size-6" viewBox="0 0 24 24" fill="none"><circle cx="14" cy="14" r="4.500" stroke="#888" stroke-width="2" stroke-dasharray="2 1.200" /><circle cx="14" cy="14" r="2" stroke="#888" /><text x="4" y="11" font-size="8" font-weight="700" fill="#222">3D</text></svg></button>
            </div>

            <svg class="min-h-0 w-full flex-1 bg-white" viewBox="911 188 1009 812" fill="none">
                <defs>
                    <linearGradient id="fillet"><stop offset="0" stop-color="#8a4545" /><stop offset=".2" stop-color="#a45252" /><stop offset=".6" stop-color="#c46262" /><stop offset="1" stop-color="#b25959" /></linearGradient>
                    <linearGradient id="root" gradientUnits="userSpaceOnUse" x1="1540" y1="725" x2="1534" y2="752"><stop offset="0" stop-color="#b25959" /><stop offset=".35" stop-color="#c46262" /><stop offset=".8" stop-color="#a35151" /><stop offset="1" stop-color="#7d3d3d" /></linearGradient>
                </defs>

                <!-- Column C1 -->
                <g stroke="#40201f" stroke-width=".8" stroke-linejoin="round">
                    <path d="M1280 219l28-17v35l-25-6-8-5z" fill="#8a4545" />
                    <path d="M1260 230l22 0 90 21v6l-35 24v677l-62-15h-15z" fill="#b25959" stroke="none" />
                    <path d="M1226 252l34-22v715l-33 20z" fill="#8a4545" stroke="none" />
                    <path d="M1259 231l7-1h11v714h-18z" fill="url(#fillet)" stroke="none" />
                    <path d="M1216 251l10 2v712l-10-2z" fill="#b25959" />
                    <path d="M1227 965l32-20c6-2 11-2 17-1l61 14" />
                    <path d="M1347 283l81-51v712l-81 50z" fill="#8a4545" />
                    <path d="M1336 280l11 3v711l-10-2-.5-35z" fill="#b25959" stroke="none" />
                    <path d="M1336.500 957v35l10 2M1336.500 280v20" />
                    <path d="M1216 251l81-51 11 2-27 18c-8 5-8 8 0 10l90 21c6 1 11 0 16-3l31-19 10 3-81 50-10-2 26-18c9-6 9-9 1-11l-83-19c-10-2-18-2-24 2l-31 19z" fill="#7d3d3d" />
                </g>
                <path d="M1322.500 188V1000" stroke="#111" stroke-dasharray="3 3" stroke-width=".9" />

                <!-- Beam B1 -->
                <path d="M1691 686L1920 741" stroke="#333" stroke-dasharray="3 2" />
                <g stroke="#40201f" stroke-width=".8" stroke-linejoin="round">
                    <path d="M1368 535l294 71 30-10v185l-295-73-2-159-27-7z" fill="#b25959" stroke="none" />
                    <path d="M1368 543l27 7v140c0 8-2 13-7 17l-20 16" />
                    <path d="M1395 695l295 72c0 6-3 9-8 12l-290-70z" fill="url(#root)" stroke="none" />
                    <path d="M1368 722l22-14 294 71-22 15z" fill="#7d3d3d" stroke="none" />
                    <path d="M1368 722l294 71v8l-294-71z" fill="#b25959" />
                    <path d="M1692 752l27 6-22 16-5-4z" fill="#7d3d3d" />
                    <path d="M1662 606l57-36v9l-22 15c-3 2-4 5-4 9v166c0 3 3 3 6 2l20-13v9l-57 34v-8l18-12c6-4 8-7 8-12V606c0-6-3-6-8-3l-18 12z" fill="#8a4545" />
                    <path d="M1368 535l56-36 295 71-57 36z" fill="#7d3d3d" />
                </g>

                <!-- Member names, following the slope of the steel -->
                <g fill="#111">
                    <text transform="translate(1332 450) rotate(-90)" x="0 34" font-size="49" font-style="italic">C1</text>
                    <text transform="translate(1332 806) rotate(-90)" x="0 34" font-size="49" font-style="italic">C1</text>
                    <text transform="translate(1503 659) skewY(13)" font-size="68">B</text>
                    <text transform="translate(1543 668) skewY(13)" font-size="68">1</text>
                </g>

                <!-- Lateral plate and bolts -->
                <g stroke="#252b31" stroke-width=".8">
                    <path d="M1381 554l9-4 62 17-5 4-63-16z" fill="#46505a" />
                    <path d="M1386 554l61 16v125l-61-14z" fill="#6b7782" />
                    <path d="M1447 570l5-3v125l-5 3z" fill="#4a555f" />
                    <path d="M1379 556h7v125h-7z" fill="#c9be8a" />
                    <path d="M1384.500 557v122" stroke="#8f8660" />
                    <g fill="#3f4448"><circle cx="1418" cy="592" r="10.500" /><circle cx="1418" cy="627" r="10.500" /><circle cx="1418" cy="663" r="10.500" /></g>
                    <path d="M1404 590l5-7 11-1 5 8-1 8-7 6-8-2-5-4zM1404 625l5-7 11-1 5 8-1 8-7 6-8-2-5-4zM1404 661l5-7 11-1 5 8-1 8-7 6-8-2-5-4z" fill="#62676b" />
                </g>

                <!-- Local axes -->
                <path d="M1320.500 510v85M1417.500 556v26M1417.500 603v14" stroke="#2fd025" stroke-width="1.300" />
                <path d="M1318 517h4v10h-4z" fill="#0a6a0a" />
                <path d="M1320.500 517l-3 8 3 5 2-5z" fill="#0f0" />
                <path d="M1415 555h5l-2.500 5z" fill="#0a0" stroke="#0a5a0a" stroke-width=".5" />
                <path d="M1312 590l14 3v15l-14-3z" fill="#5c0064" stroke="#222" />
                <path d="M1321 599l-51 30M1413 629l-46 29" stroke="#2a20c8" stroke-width="1.300" />
                <path d="M1270 629l12-3-3-6zM1367 658l12-3-3-6z" fill="#00c" stroke="#006" />
                <path d="M1326 600l11 3M1427 628l73 18" stroke="#e11" stroke-width="1.300" />
                <path d="M1496 645l-14-6-1 5z" fill="#900" stroke="#600" />
                <g font-size="9"><text x="1317" y="502" fill="#3c3">Y</text><text x="1415" y="530" fill="#1d1">Y</text><text x="1261" y="636" fill="#32c">Z</text><text x="1359" y="664" fill="#32c">Z</text><text x="1505" y="650" fill="#e11">X</text></g>

                <!-- Axis triad -->
                <path d="M1004.500 944v-30" stroke="#0000c8" stroke-width="2" />
                <path d="M1004.500 904l-4 11h8z" fill="#00d" />
                <path d="M1004 944l-26-6" stroke="#a00" stroke-width="2" />
                <path d="M967 936l12-2-1 7z" fill="#d00" />
                <path d="M1004 944l-15 10" stroke="#0d0" stroke-width="2" />
                <path d="M982 959l5-8 4 6z" fill="#0e0" stroke="#080" />
                <g font-size="14" font-weight="600"><text x="1000" y="899" fill="#00e">Z</text><text x="955" y="937" fill="#e00">X</text><text x="973" y="965" fill="#0e0">Y</text></g>
            </svg>
        </div>
    </main>

    <footer class="flex h-10 items-center justify-center border-t border-[#cfcfcf] bg-[#e8e8e8]">
        <button class="h-[25px] w-[69px] border-2 border-[#0078d7] bg-[#e1e1e1]">Accept</button>
    </footer>

    <!-- Callout from the list entry to the plate in the model -->
    <svg class="pointer-events-none absolute inset-0 h-full w-full" viewBox="0 0 1920 1040" fill="none" stroke="#cf202c" stroke-width="2.500">
        <path d="M7.500 212h305.500v25H7.500z" />
        <path d="M1353 523h119v203h-119z" />
        <path d="M134 238C122 290 118 340 118 386C118 700 380 878 735 878C980 878 1180 808 1337 713" />
        <path d="M1349 705l-19 2 9 14z" fill="#cf202c" stroke="none" />
    </svg>

</body>

</html>
